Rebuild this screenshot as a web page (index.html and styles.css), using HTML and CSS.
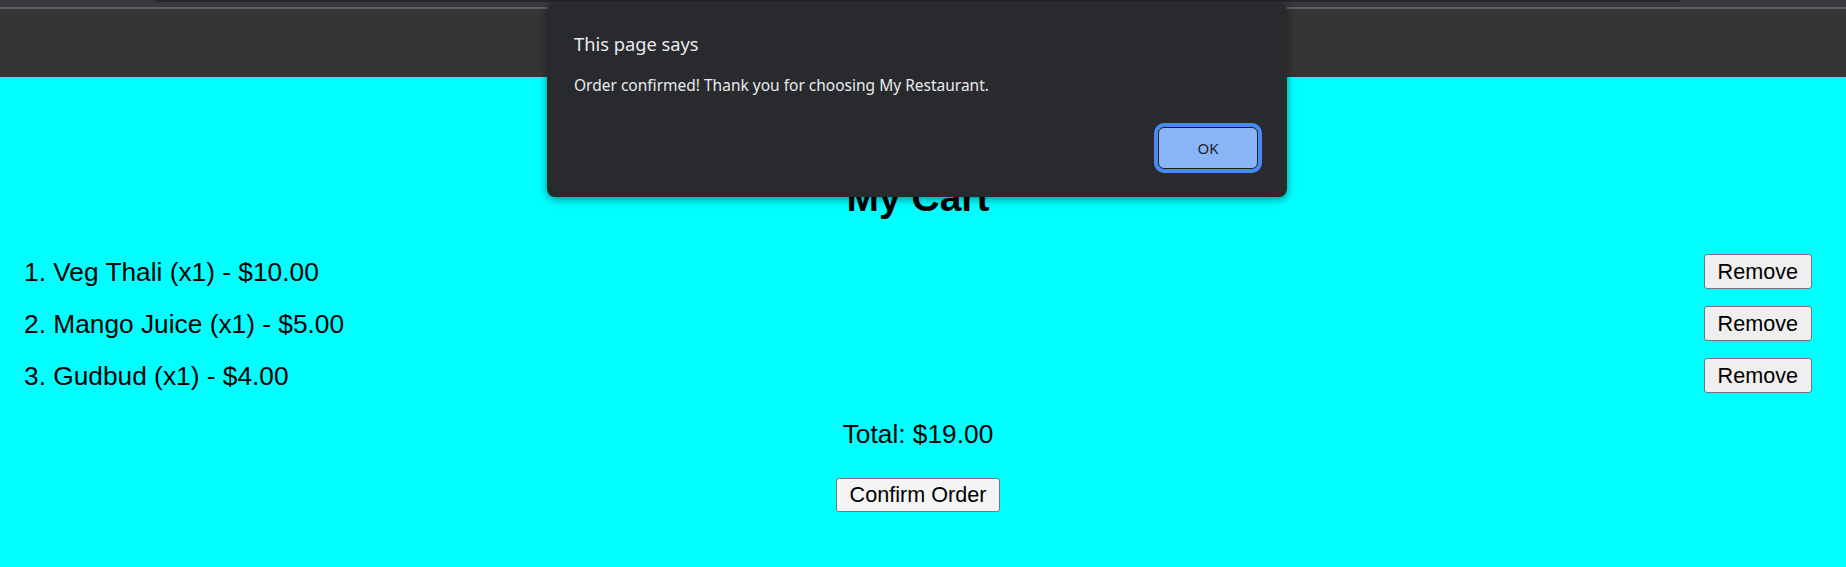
FILE: index.html
```html
<!DOCTYPE html>
<html>
<head>
<meta charset="utf-8">
<title>My Cart</title>
<link rel="stylesheet" href="styles.css">
</head>
<body>
<div class="chrome"><div class="chrome-pill"></div></div>
<header class="site-header"></header>
<main class="cart">
  <h2 class="cart-title">My Cart</h2>
  <ul class="cart-list">
    <li class="cart-item"><span class="item-text">1. Veg Thali (x1) - $10.00</span><button class="btn">Remove</button></li>
    <li class="cart-item"><span class="item-text">2. Mango Juice (x1) - $5.00</span><button class="btn">Remove</button></li>
    <li class="cart-item"><span class="item-text">3. Gudbud (x1) - $4.00</span><button class="btn">Remove</button></li>
  </ul>
  <p class="total">Total: $19.00</p>
  <div class="actions"><button class="btn">Confirm Order</button></div>
</main>
<div class="dialog">
  <div class="dialog-title">This page says</div>
  <div class="dialog-message">Order confirmed! Thank you for choosing My Restaurant.</div>
  <div class="dialog-actions"><button class="dialog-ok">OK</button></div>
</div>
</body>
</html>
```
FILE: styles.css
```css
* { box-sizing: border-box; }
html, body { margin: 0; padding: 0; }
body {
  background: #00ffff;
  font-family: "Liberation Sans", Arial, sans-serif;
  color: #000;
  width: 1846px;
  height: 567px;
  overflow: hidden;
  position: relative;
}
.chrome {
  height: 9px;
  background: #37383b;
  border-bottom: 2px solid #5d5e61;
  display: flex;
  padding: 0 166px 0 155px;
}
.chrome-pill {
  flex: 1;
  height: 2px;
  background: #26272a;
  border-radius: 0 0 6px 6px;
}
.site-header {
  height: 68px;
  background: #353535;
}
.cart {
  padding: 0 34px 0 24px;
  text-align: center;
}
.cart-title {
  margin: 99px 0 34px;
  font-size: 39px;
  line-height: 44px;
  font-weight: bold;
}
.cart-list {
  list-style: none;
  margin: 0;
  padding: 0;
  display: flex;
  flex-direction: column;
  gap: 17px;
  text-align: left;
}
.cart-item {
  display: flex;
  justify-content: space-between;
  align-items: center;
}
.item-text {
  font-size: 26.3px;
  line-height: 30px;
}
.btn {
  font-family: "Liberation Sans", Arial, sans-serif;
  font-size: 21.6px;
  height: 35px;
  padding: 0 13px;
  background: #efefef;
  color: #000;
  border: 1px solid #767676;
  border-radius: 3px;
}
.total {
  margin: 26px 0 29px;
  font-size: 26.3px;
  line-height: 30px;
}
.actions .btn {
  height: 34px;
  background: #f4f4f4;
}
.dialog {
  position: absolute;
  left: 547px;
  top: 3px;
  width: 740px;
  height: 194px;
  background: #292a2d;
  border-radius: 8px;
  box-shadow: 0 2px 8px rgba(0, 0, 0, 0.45);
  padding: 29px 29px 28px 27px;
  display: flex;
  flex-direction: column;
  font-family: "Noto Sans", "Open Sans", sans-serif;
  color: #e8eaed;
}
.dialog-title {
  font-size: 18.3px;
  line-height: 24px;
}
.dialog-message {
  margin-top: 19px;
  font-size: 15.5px;
  line-height: 20px;
}
.dialog-actions {
  margin-top: auto;
  display: flex;
  justify-content: flex-end;
}
.dialog-ok {
  width: 100px;
  height: 42px;
  background: #8ab4f8;
  color: #202124;
  border: 1px solid #1e1f22;
  border-radius: 6px;
  box-shadow: 0 0 0 4px #4b8af3;
  font-family: "Noto Sans", "Open Sans", sans-serif;
  font-size: 15px;
  padding: 0;
}
```
